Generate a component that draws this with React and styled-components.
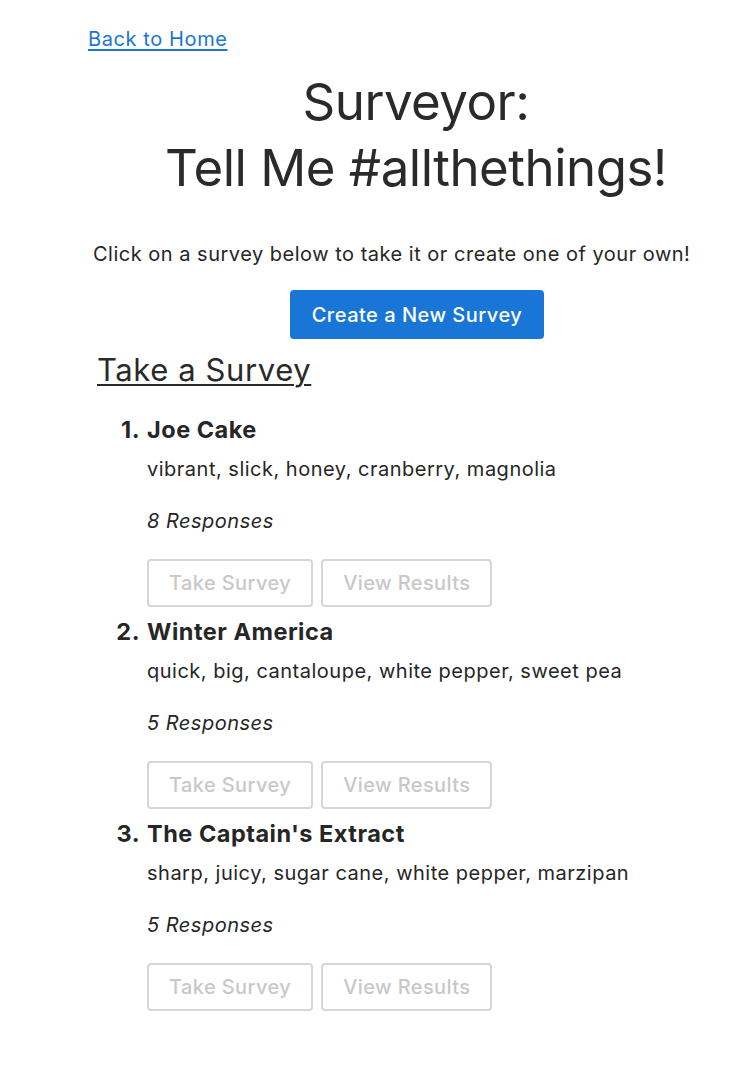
import React from "react";
import styled, { createGlobalStyle } from "styled-components";

const GlobalStyle = createGlobalStyle`
  body {
    margin: 0;
    background: #ffffff;
    font-family: Inter, "Noto Sans", sans-serif;
    color: #262626;
  }
`;

const surveys = [
  {
    name: "Joe Cake",
    keywords: "vibrant, slick, honey, cranberry, magnolia",
    responses: 8,
  },
  {
    name: "Winter America",
    keywords: "quick, big, cantaloupe, white pepper, sweet pea",
    responses: 5,
  },
  {
    name: "The Captain's Extract",
    keywords: "sharp, juicy, sugar cane, white pepper, marzipan",
    responses: 5,
  },
];

export default function App() {
  return (
    <>
      <GlobalStyle />
      <Wrapper>
        <BackLink href="#">Back to Home</BackLink>

        <Title>
          Surveyor:
          <br />
          Tell Me #allthethings!
        </Title>

        <Intro>Click on a survey below to take it or create one of your own!</Intro>

        <CreateRow>
          <CreateButton>Create a New Survey</CreateButton>
        </CreateRow>

        <SectionTitle>Take a Survey</SectionTitle>

        <SurveyList>
          {surveys.map((s, index) => (
            <SurveyItem key={index}>
              <SurveyName>{s.name}</SurveyName>
              <Keywords>{s.keywords}</Keywords>
              <Responses>{s.responses} Responses</Responses>
              <ButtonRow>
                <GhostButton>Take Survey</GhostButton>
                <GhostButton>View Results</GhostButton>
              </ButtonRow>
            </SurveyItem>
          ))}
        </SurveyList>
      </Wrapper>
    </>
  );
}

const Wrapper = styled.div`
  width: 656px;
  margin-left: 88px;
  padding-top: 25px;
  padding-bottom: 60px;
`;

const BackLink = styled.a`
  display: inline-block;
  font-size: 20px;
  line-height: 28px;
  letter-spacing: 0.6px;
  color: #1976d2;
  text-decoration: underline;
  text-underline-offset: 3px;
`;

const Title = styled.h1`
  margin: 16px 0 0 0;
  text-align: center;
  font-size: 51px;
  font-weight: 400;
  line-height: 66px;
  letter-spacing: -0.5px;
  color: #2a2a2a;
`;

const Intro = styled.p`
  margin: 39px 0 0 5px;
  font-size: 20px;
  line-height: 28px;
  letter-spacing: 0.5px;
  color: #262626;
`;

const CreateRow = styled.div`
  display: flex;
  justify-content: center;
  margin-top: 22px;
`;

const CreateButton = styled.button`
  width: 254px;
  height: 49px;
  margin-left: 2px;
  border: none;
  border-radius: 4px;
  background-color: #1976d6;
  color: white;
  font-family: Inter, "Noto Sans", sans-serif;
  font-size: 20px;
  font-weight: 500;
  letter-spacing: 0.5px;
`;

const SectionTitle = styled.h2`
  margin: 13px 0 0 9px;
  font-size: 31px;
  font-weight: 400;
  line-height: 36px;
  text-decoration: underline;
  text-decoration-thickness: 2px;
  text-underline-offset: 3px;
  color: #2a2a2a;
  letter-spacing: 0.6px;
`;

const SurveyList = styled.ol`
  margin: 28px 0 0 0;
  padding-left: 59px;
  list-style: none;
  counter-reset: survey;
`;

const SurveyItem = styled.li`
  counter-increment: survey;
  margin-bottom: 11px;
`;

const SurveyName = styled.h3`
  position: relative;
  margin: 0;
  font-size: 23.5px;
  font-weight: 700;
  line-height: 28px;
  letter-spacing: 0.5px;
  color: #262626;

  &::before {
    content: counter(survey) ".";
    position: absolute;
    right: 100%;
    margin-right: 7px;
  }
`;

const Keywords = styled.p`
  margin: 11px 0 0 0;
  font-size: 20px;
  line-height: 28px;
  letter-spacing: 0.5px;
`;

const Responses = styled.p`
  margin: 24px 0 0 0;
  font-size: 20px;
  font-style: italic;
  line-height: 28px;
  letter-spacing: 0.5px;
`;

const ButtonRow = styled.div`
  display: flex;
  gap: 8px;
  margin-top: 24px;
`;

const GhostButton = styled.button`
  height: 48px;
  padding: 0 20px;
  border: 2px solid #d6d6d6;
  border-radius: 4px;
  background: white;
  color: #c8c8c8;
  font-family: Inter, "Noto Sans", sans-serif;
  font-size: 20px;
  font-weight: 500;
  letter-spacing: 0.4px;
`;
